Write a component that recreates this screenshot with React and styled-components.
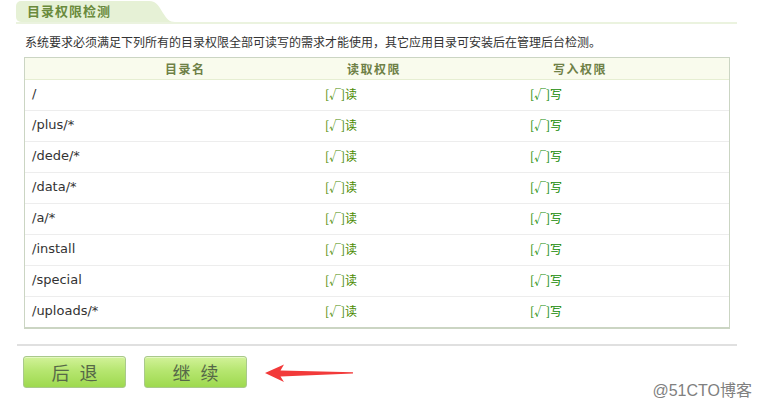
import React from "react";
import styled, { createGlobalStyle } from "styled-components";

const cjk = `"Noto Sans CJK SC", "Noto Sans", sans-serif`;

const Global = createGlobalStyle`
	html, body {
		margin: 0;
		background: #ffffff;
	}
	body {
		font-family: ${cjk};
		color: #333333;
	}
`;

// whole install step
const Page = styled.div`
	position: relative;
	width: 762px;
	height: 411px;
	padding-left: 16px;
	box-sizing: border-box;
	overflow: hidden;
`;

// tab strip with the long line under it
const TabBar = styled.div`
	display: flex;
	align-items: flex-end;
	width: 721px;
	height: 21px;
	padding-top: 1px;
	border-bottom: 2px solid #ebf3df;
`;

const Tab = styled.div`
	height: 21px;
	width: 127px;
	padding-left: 11px;
	box-sizing: border-box;
	background: #e6f1d6;
	border-radius: 5px 0 0 5px;
	font-size: 13px;
	font-weight: bold;
	letter-spacing: 1px;
	line-height: 20px;
	color: #6a8a3c;
`;

const TabTail = styled.svg`
	display: block;
	width: 32px;
	height: 21px;
`;

const Desc = styled.p`
	margin: 10px 0 7px 9px;
	font-size: 12px;
	line-height: 16px;
	color: #333333;
`;

const Table = styled.div`
	margin-left: 8px;
	width: 706px;
	box-sizing: border-box;
	border: 1px solid #cbd5c3;
	border-bottom-width: 2px;
`;

const Row = styled.div`
	display: grid;
	grid-template-columns: 295px 205px 1fr;
	height: ${({ $head }) => ($head ? "22px" : "31px")};
	padding-bottom: ${({ $head }) => ($head ? "0" : "3px")};
	box-sizing: border-box;
	background: ${({ $head }) => ($head ? "#f9fbed" : "#ffffff")};
	border-bottom: 1px solid ${({ $head }) => ($head ? "#e6eed2" : "#ededed")};
	align-items: center;

	&:last-child {
		height: 30px;
		border-bottom: none;
	}
`;

const HeadCell = styled.div`
	padding-left: ${({ $pad }) => $pad}px;
	font-size: 12px;
	font-weight: bold;
	letter-spacing: 1.5px;
	color: #6e8046;
`;

const PathCell = styled.div`
	padding-left: 7px;
	font-family: "DejaVu Sans", sans-serif;
	font-size: 13px;
	color: #333333;
`;

const OkCell = styled.div`
	padding-left: 5px;
	font-size: 12px;
	color: ${({ $write }) => ($write ? "#118a00" : "#4a8a00")};
`;

const Rule = styled.div`
	margin: 15px 0 0 1px;
	width: 720px;
	height: 2px;
	background: #e0e0e0;
`;

const ButtonRow = styled.div`
	display: flex;
	align-items: center;
	gap: 18px;
	padding: 10px 0 0 7px;
`;

const Button = styled.button`
	width: 103px;
	height: 32px;
	padding: 0 0 0 3px;
	border: 1px solid #a9c98b;
	border-radius: 3px;
	background: linear-gradient(#d2f299 0%, #b6e670 45%, #9ed94f 100%);
	box-shadow: inset 0 1px 0 #e4f8c0;
	font-family: ${cjk};
	font-size: 18px;
	letter-spacing: 3px;
	color: #566848;
	white-space: pre;
	cursor: pointer;
`;

const Arrow = styled.svg`
	display: block;
	width: 90px;
	height: 20px;
	margin-top: 4px;
`;

const Watermark = styled.div`
	position: absolute;
	right: 10px;
	bottom: 10px;
	font-family: "Liberation Sans", ${cjk};
	font-size: 16px;
	color: #808080;
	text-shadow: 0 0 2px #ffffff, 0 0 1px #ffffff;
`;

const dirs = ["/", "/plus/*", "/dede/*", "/data/*", "/a/*", "/install", "/special", "/uploads/*"];

export default function App() {
	return (
		<Page>
			<Global />
			<TabBar>
				<Tab>目录权限检测</Tab>
				<TabTail viewBox="0 0 32 21">
					<path d="M0 0 H6 C14 0 16 6 20 12 C24 18 26 21 32 21 H0 Z" fill="#e6f1d6" />
				</TabTail>
			</TabBar>
			<Desc>系统要求必须满足下列所有的目录权限全部可读写的需求才能使用，其它应用目录可安装后在管理后台检测。</Desc>
			<Table>
				<Row $head>
					<HeadCell $pad={140}>目录名</HeadCell>
					<HeadCell $pad={27}>读取权限</HeadCell>
					<HeadCell $pad={28}>写入权限</HeadCell>
				</Row>
				{dirs.map((d) => (
					<Row key={d}>
						<PathCell>{d}</PathCell>
						<OkCell>[√]读</OkCell>
						<OkCell $write>[√]写</OkCell>
					</Row>
				))}
			</Table>
			<Rule />
			<ButtonRow>
				<Button>后 退</Button>
				<Button>继 续</Button>
				<Arrow viewBox="0 0 90 20">
					<polygon points="0,9 19,0.5 15.5,6.5 88,8.3 88,9.6 15.5,12.5 19,18" fill="#f23a3a" />
				</Arrow>
			</ButtonRow>
			<Watermark>@51CTO博客</Watermark>
		</Page>
	);
}
